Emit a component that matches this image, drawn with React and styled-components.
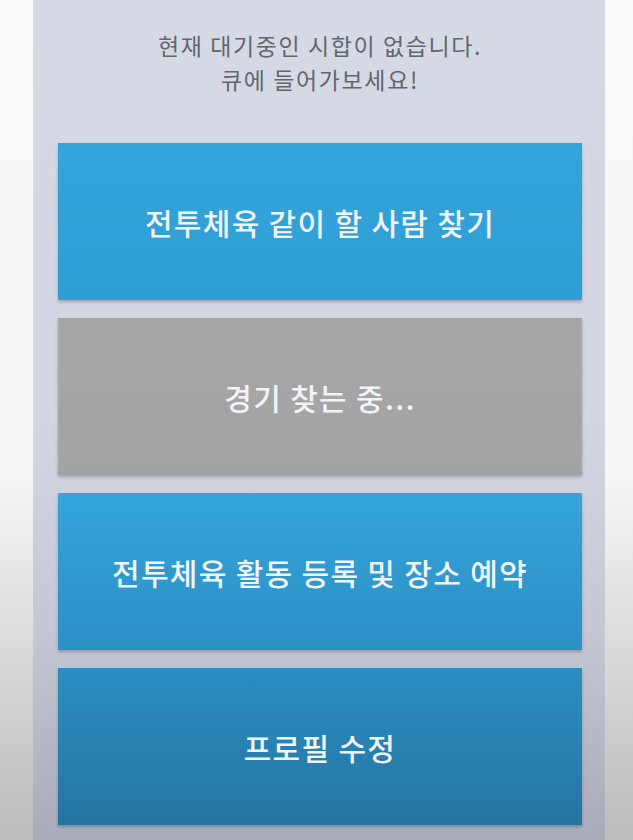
import React from "react";
import styled, { createGlobalStyle } from "styled-components";

const GlobalStyle = createGlobalStyle`
  html, body {
    margin: 0;
    padding: 0;
    height: 100%;
  }
  body {
    background: linear-gradient(to bottom, #f9f9f9 0%, #f7f7f7 56%, #bcbcbc 100%);
    font-family: "Noto Sans CJK KR", "Noto Sans", sans-serif;
    overflow: hidden;
  }
`;

const menu = [
  { label: "전투체육 같이 할 사람 찾기", from: "#33a5dc", to: "#2f9ed5" },
  { label: "경기 찾는 중...", from: "#a7a7a7", to: "#a3a3a3" },
  { label: "전투체육 활동 등록 및 장소 예약", from: "#35a5db", to: "#2b8fc4" },
  { label: "프로필 수정", from: "#2b8fc1", to: "#2574a2" },
];

const App = () => {
  return (
    <>
      <GlobalStyle />
      <Page>
        <Screen>
          <Message>
            현재 대기중인 시합이 없습니다.
            <br />
            큐에 들어가보세요!
          </Message>
          <MenuList>
            {menu.map((item) => (
              <MenuButton key={item.label} $from={item.from} $to={item.to}>
                {item.label}
              </MenuButton>
            ))}
          </MenuList>
        </Screen>
      </Page>
    </>
  );
};

const Page = styled.div`
  display: flex;
  height: 840px;
  padding-left: 33px;
`;

const Screen = styled.div`
  width: 572px;
  height: 840px;
  box-sizing: border-box;
  padding: 29px 23px 0 25px;
  display: flex;
  flex-direction: column;
  background: linear-gradient(to bottom, #d6dae5 0%, #d3d6e3 50%, #c6c7d5 75%, #a9abb8 100%);
`;

const Message = styled.p`
  margin: 0 0 47px;
  text-align: center;
  font-size: 23px;
  line-height: 33.5px;
  color: #62666d;
  letter-spacing: 1.6px;
`;

const MenuList = styled.div`
  display: flex;
  flex-direction: column;
  gap: 18px;
`;

const MenuButton = styled.button`
  height: 157px;
  width: 100%;
  border: none;
  border-radius: 0;
  display: flex;
  align-items: center;
  justify-content: center;
  background: linear-gradient(to bottom, ${(p) => p.$from}, ${(p) => p.$to});
  box-shadow: 0 2px 3px rgba(40, 50, 70, 0.3);
  color: #f1f4f6;
  font-family: "Noto Sans CJK KR", "Noto Sans", sans-serif;
  font-size: 30px;
  font-weight: 500;
  letter-spacing: 1.3px;
  cursor: pointer;
`;

export default App;
